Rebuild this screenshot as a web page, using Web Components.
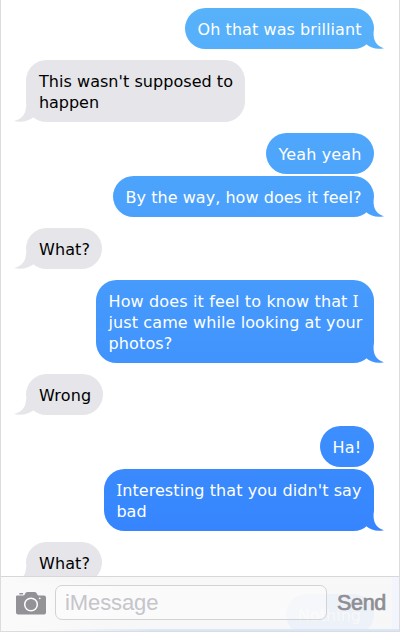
<!DOCTYPE html>
<html lang="en"><head><meta charset="utf-8"><title>Messages</title>
<style>html,body{margin:0;height:100%;overflow:hidden;background:#fff}</style></head>
<body>
<chat-window>
<chat-group side="sent"><chat-bubble side="sent" tail w="188.5"><chat-line w="163">Oh that was brilliant</chat-line></chat-bubble></chat-group>
<chat-group><chat-bubble tail w="218.5"><chat-line w="193">This wasn't supposed to</chat-line><chat-line w="59">happen</chat-line></chat-bubble></chat-group>
<chat-group side="sent"><chat-bubble side="sent" w="107.5"><chat-line w="82">Yeah yeah</chat-line></chat-bubble><chat-bubble side="sent" tail w="260.5"><chat-line w="235">By the way, how does it feel?</chat-line></chat-bubble></chat-group>
<chat-group><chat-bubble tail w="76"><chat-line w="50">What?</chat-line></chat-bubble></chat-group>
<chat-group side="sent"><chat-bubble side="sent" tail w="277.5"><chat-line w="249">How does it feel to know that <b>I</b></chat-line><chat-line w="253">just came while looking at your</chat-line><chat-line w="63">photos?</chat-line></chat-bubble></chat-group>
<chat-group><chat-bubble tail w="77"><chat-line w="51.5">Wrong</chat-line></chat-bubble></chat-group>
<chat-group side="sent"><chat-bubble side="sent" w="53.5"><chat-line w="28">Ha!</chat-line></chat-bubble><chat-bubble side="sent" tail w="269.5"><chat-line w="244"><b>I</b>nteresting that you didn't say</chat-line><chat-line w="29">bad</chat-line></chat-bubble></chat-group>
<chat-group><chat-bubble tail w="76"><chat-line w="50">What?</chat-line></chat-bubble></chat-group>
<chat-group side="sent"><chat-bubble side="sent" w="88"><chat-line w="62">Nothing</chat-line></chat-bubble></chat-group>
<message-bar slot="bar"></message-bar>
</chat-window>
<script>
const shadow=(el,html)=>{const t=document.createElement('template');t.innerHTML=html;
  el.attachShadow({mode:'open'}).append(t.content.cloneNode(true));};
customElements.define('chat-window',class extends HTMLElement{constructor(){super();shadow(this,`
<style>:host{display:block;position:relative;box-sizing:border-box;width:400px;height:632px;overflow:hidden;border:1px solid #dcdcdf;border-top:0;background:#fff}
.list{display:flex;flex-direction:column;gap:11px;padding:8px 25.5px 0 25px}</style>
<div class="list"><slot></slot></div><slot name="bar"></slot>`)}});
customElements.define('chat-group',class extends HTMLElement{constructor(){super();shadow(this,`
<style>:host{display:flex;flex-direction:column;align-items:flex-start;gap:2px;flex:none}
:host([side=sent]){align-items:flex-end}</style><slot></slot>`)}});
customElements.define('chat-bubble',class extends HTMLElement{constructor(){super();shadow(this,`
<style>:host{display:block;position:relative;box-sizing:border-box;padding:11px 0 9px 13px;border-radius:20.5px;background:#e5e5ea;color:#000;font:16px/21px "DejaVu Sans",sans-serif}
:host([side=sent]){padding-left:12.5px;color:#fff;background:linear-gradient(#58b3fa 0,#3685fe 530px,#3380ff 632px) fixed}
i{display:none;position:absolute;width:22px;height:16px;left:-12px;bottom:0;background:#e5e5ea;clip-path:path("M12 0 C12 8 8 13 0 15 Q11 17.5 20 11 L22 4 L14 -4 Z")}
:host([tail]) i{display:block}
:host([side=sent]) i{left:auto;right:-11px;background:linear-gradient(#58b3fa 0,#3685fe 530px,#3380ff 632px) fixed;clip-path:path("M11 0 C11 8 14 13 21.5 15.2 Q11 17.5 3.5 11 L0 4 L8 -4 Z")}
</style><i></i><slot></slot>`)}
connectedCallback(){this.style.width=this.getAttribute('w')+'px'}});
// Each line is tracked so that it fills its measure.
customElements.define('chat-line',class extends HTMLElement{constructor(){super();shadow(this,`
<style>:host{display:block;position:relative;z-index:1;width:max-content;height:21px;white-space:nowrap}::slotted(b){font-family:"Noto Sans",sans-serif;font-size:16.5px;font-weight:400;line-height:1}</style><slot></slot>`)}
connectedCallback(){const w=this.getBoundingClientRect().width;
this.style.letterSpacing=((+this.getAttribute('w')+1)-w)/this.textContent.length+'px'}});
customElements.define('message-bar',class extends HTMLElement{constructor(){super();shadow(this,`
<style>:host{position:absolute;z-index:3;left:0;right:0;bottom:0;height:55px;box-sizing:border-box;border-top:1px solid #d7d7da;display:flex;align-items:flex-start;padding:8px 0 0 14px;font-family:"Liberation Sans",sans-serif;background:linear-gradient(90deg,#d8e8fb00 50px,#d8e8fb 150px) 0 100%/100% 2px no-repeat,linear-gradient(90deg,#f2f5fb00 391px,#f2f5fb 391px),linear-gradient(90deg,#fafafaf2,#f7f7f8f2 30%)}
svg{width:32px;height:25px;margin-top:6px;flex:none}
.field{box-sizing:border-box;width:272px;height:35px;margin-left:8px;border:1.5px solid #d3d3d6;border-radius:7px;background:#fdfdfe88;color:#c5c5ca;font-size:22px;line-height:34px;padding-left:9px;letter-spacing:-.1px}
strong{font-size:21.5px;line-height:36px;margin-left:10px;color:#8e8e93;font-weight:400;letter-spacing:-.3px;-webkit-text-stroke:.7px #8e8e93}
</style>
<svg viewBox="0 0 32 25"><path fill="#929297" d="M2 4.5H8Q9.5 4.5 10 3L10.7 1.8Q11.2 1 12.5 1H19.5Q20.8 1 21.3 1.8L22 3Q22.7 4.5 24 4.5H29Q31 4.5 31 6.5V21.5Q31 23.5 29 23.5H3Q1 23.5 1 21.5V5.5Q1 4.5 2 4.5Z"/><rect x="4.2" y="2" width="4" height="1.5" rx=".7" fill="#929297"/><circle cx="16" cy="13.5" r="6.3" fill="none" stroke="#fff" stroke-width="1.5"/><circle cx="24.7" cy="7.3" r=".9" fill="#fff"/></svg>
<div class="field">iMessage</div><strong>Send</strong>`)}});
</script></body></html>
